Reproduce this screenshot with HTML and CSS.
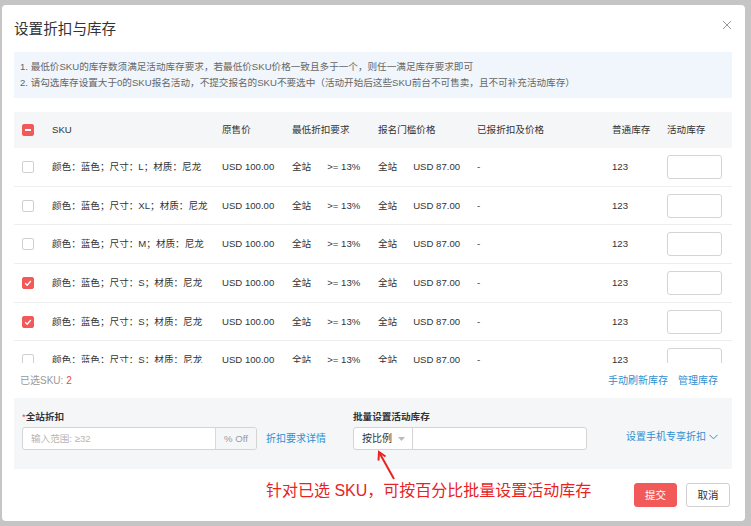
FILE: index.html
```html
<!DOCTYPE html>
<html lang="zh-CN">
<head>
<meta charset="utf-8">
<title>设置折扣与库存</title>
<link rel="stylesheet" href="styles.css">
</head>
<body>
<div class="modal">
  <div class="modal-head">
    <h2 class="title">设置折扣与库存</h2>
    <svg class="close" width="10" height="10" viewBox="0 0 10 10"><path d="M1 1L9 9M9 1L1 9" stroke="#999" stroke-width="1" fill="none"/></svg>
  </div>

  <div class="notice">
    <p>1. 最低价SKU的库存数须满足活动库存要求，若最低价SKU价格一致且多于一个，则任一满足库存要求即可</p>
    <p>2. 请勾选库存设置大于0的SKU报名活动，不提交报名的SKU不要选中（活动开始后这些SKU前台不可售卖，且不可补充活动库存）</p>
  </div>

  <div class="table">
    <div class="row head">
      <div class="c-check"><span class="cb cb-half"><i></i></span></div>
      <div>SKU</div>
      <div>原售价</div>
      <div>最低折扣要求</div>
      <div>报名门槛价格</div>
      <div>已报折扣及价格</div>
      <div>普通库存</div>
      <div>活动库存</div>
    </div>
    <div class="tbody">
      <div class="row">
        <div class="c-check"><span class="cb"></span></div>
        <div>颜色：蓝色；尺寸：L；材质：尼龙</div>
        <div>USD 100.00</div>
        <div class="pair"><span>全站</span><span>&gt;= 13%</span></div>
        <div class="pair"><span>全站</span><span>USD 87.00</span></div>
        <div>-</div>
        <div>123</div>
        <div><span class="qty"></span></div>
      </div>
      <div class="row">
        <div class="c-check"><span class="cb"></span></div>
        <div>颜色：蓝色；尺寸：XL；材质：尼龙</div>
        <div>USD 100.00</div>
        <div class="pair"><span>全站</span><span>&gt;= 13%</span></div>
        <div class="pair"><span>全站</span><span>USD 87.00</span></div>
        <div>-</div>
        <div>123</div>
        <div><span class="qty"></span></div>
      </div>
      <div class="row">
        <div class="c-check"><span class="cb"></span></div>
        <div>颜色：蓝色；尺寸：M；材质：尼龙</div>
        <div>USD 100.00</div>
        <div class="pair"><span>全站</span><span>&gt;= 13%</span></div>
        <div class="pair"><span>全站</span><span>USD 87.00</span></div>
        <div>-</div>
        <div>123</div>
        <div><span class="qty"></span></div>
      </div>
      <div class="row">
        <div class="c-check"><span class="cb cb-on"><svg width="12" height="12" viewBox="0 0 12 12"><path d="M3.2 6.2L5.2 8.2L8.8 4" stroke="#fff" stroke-width="1.3" fill="none"/></svg></span></div>
        <div>颜色：蓝色；尺寸：S；材质：尼龙</div>
        <div>USD 100.00</div>
        <div class="pair"><span>全站</span><span>&gt;= 13%</span></div>
        <div class="pair"><span>全站</span><span>USD 87.00</span></div>
        <div>-</div>
        <div>123</div>
        <div><span class="qty"></span></div>
      </div>
      <div class="row">
        <div class="c-check"><span class="cb cb-on"><svg width="12" height="12" viewBox="0 0 12 12"><path d="M3.2 6.2L5.2 8.2L8.8 4" stroke="#fff" stroke-width="1.3" fill="none"/></svg></span></div>
        <div>颜色：蓝色；尺寸：S；材质：尼龙</div>
        <div>USD 100.00</div>
        <div class="pair"><span>全站</span><span>&gt;= 13%</span></div>
        <div class="pair"><span>全站</span><span>USD 87.00</span></div>
        <div>-</div>
        <div>123</div>
        <div><span class="qty"></span></div>
      </div>
      <div class="row">
        <div class="c-check"><span class="cb"></span></div>
        <div>颜色：蓝色；尺寸：S；材质：尼龙</div>
        <div>USD 100.00</div>
        <div class="pair"><span>全站</span><span>&gt;= 13%</span></div>
        <div class="pair"><span>全站</span><span>USD 87.00</span></div>
        <div>-</div>
        <div>123</div>
        <div><span class="qty"></span></div>
      </div>
    </div>
  </div>

  <div class="summary">
    <div class="selected">已选SKU: <em>2</em></div>
    <div class="links"><a>手动刷新库存</a><a>管理库存</a></div>
  </div>

  <div class="batch">
    <div class="field f1">
      <div class="label"><b class="req">*</b>全站折扣</div>
      <div class="ctrl">
        <div class="group">
          <span class="inp">输入范围: ≥32</span><span class="addon">% Off</span>
        </div>
        <a class="link">折扣要求详情</a>
      </div>
    </div>
    <div class="field f2">
      <div class="label">批量设置活动库存</div>
      <div class="ctrl">
        <div class="group">
          <span class="select">按比例<svg width="7" height="4" viewBox="0 0 7 4"><path d="M0 0H7L3.5 4Z" fill="#bbb"/></svg></span><span class="inp2"></span>
        </div>
      </div>
    </div>
    <div class="field f3">
      <a class="link mobile">设置手机专享折扣<svg width="9" height="6" viewBox="0 0 9 6"><path d="M0.5 0.8L4.5 4.8L8.5 0.8" stroke="#2f8fd0" stroke-width="1" fill="none"/></svg></a>
    </div>
  </div>

  <div class="actions">
    <p class="note">针对已选 SKU，可按百分比批量设置活动库存</p>
    <div class="btns">
      <span class="btn btn-primary">提交</span>
      <span class="btn">取消</span>
    </div>
  </div>

  <svg class="pointer" width="30" height="36" viewBox="0 0 30 36">
    <path d="M22 30L7.5 4" stroke="#e8231f" stroke-width="2" fill="none"/>
    <path d="M6.5 11.5L7 3L13.5 7.5" stroke="#e8231f" stroke-width="2" fill="none" stroke-linejoin="miter"/>
  </svg>
</div>
</body>
</html>
```

FILE: styles.css
```css
* { box-sizing: border-box; }

body {
  margin: 0;
  background: #c5c5c5;
  font-family: "Liberation Sans", "Noto Sans CJK SC", sans-serif;
  color: #333;
  font-size: 9.6px;
  line-height: 14px;
}

.modal {
  position: relative;
  width: 743px;
  height: 516px;
  margin: 5px 0 0 2px;
  background: #fff;
  border-radius: 4px;
  padding: 0 13px 0 12px;
  display: flex;
  flex-direction: column;
}

.modal-head {
  height: 47px;
  padding-top: 14px;
  display: flex;
  justify-content: space-between;
  align-items: flex-start;
}

.title {
  margin: 0;
  font-size: 14.6px;
  line-height: 20px;
  font-weight: normal;
  color: #333;
}

.close {
  margin-top: 1px;
  margin-right: 0;
}

.notice {
  height: 46px;
  background: #f0f6fc;
  padding: 7px 6px;
  color: #666;
}

.notice p {
  margin: 0;
  line-height: 16px;
  white-space: nowrap;
}

.table {
  margin-top: 14px;
}

.row {
  display: grid;
  grid-template-columns: 38px 170px 70px 86px 99px 135px 55px 65px;
  align-items: center;
  white-space: nowrap;
}

.row.head {
  height: 36px;
  background: #f5f6f8;
}

.tbody {
  height: 215px;
  overflow: hidden;
}

.tbody .row {
  height: 38.7px;
  border-bottom: 1px solid #eeeeee;
}

.c-check {
  padding-left: 8px;
  display: flex;
  align-items: center;
}

.cb {
  width: 12px;
  height: 12px;
  border: 1px solid #cfcfcf;
  border-radius: 2px;
  background: #fff;
  display: flex;
  align-items: center;
  justify-content: center;
}

.cb-half, .cb-on {
  background: #f25a5a;
  border-color: #f25a5a;
}

.cb-half i {
  display: block;
  width: 6px;
  height: 2px;
  background: #fff;
}

.cb-on svg { flex: none; }

.pair {
  display: flex;
  align-items: baseline;
  gap: 16px;
}

.qty {
  display: block;
  width: 55px;
  height: 24px;
  border: 1px solid #d4d4d4;
  border-radius: 3px;
  background: #fff;
}

.summary {
  height: 35px;
  padding: 0 14px 0 6px;
  display: flex;
  align-items: center;
  justify-content: space-between;
}

.selected { color: #999; font-size: 10px; }
.selected em { font-style: normal; color: #f04545; }

.links { display: flex; gap: 10px; font-size: 10px; }

a, .link {
  color: #2f8fd0;
  text-decoration: none;
}

.batch {
  height: 71px;
  background: #f5f6f8;
  padding: 12px 14px 0 8px;
  display: flex;
}

.label {
  line-height: 14px;
  font-weight: bold;
  color: #333;
}

.req { color: #f04545; font-weight: normal; }

.ctrl {
  margin-top: 3px;
  display: flex;
  align-items: center;
  gap: 9px;
}

.ctrl .link { font-size: 10px; }

.f1 { width: 331px; }
.f2 { width: 234px; }
.f3 {
  flex: 1;
  display: flex;
  justify-content: flex-end;
  align-items: center;
  padding-top: 6px;
  height: 47px;
}

.group {
  display: flex;
  height: 23px;
  border: 1px solid #d4d4d4;
  border-radius: 3px;
  background: #fff;
  overflow: hidden;
}

.inp {
  width: 192px;
  padding-left: 8px;
  line-height: 21px;
  color: #b5b5b5;
}

.addon {
  width: 41px;
  border-left: 1px solid #d9d9d9;
  background: #f5f6f8;
  color: #999;
  text-align: center;
  line-height: 21px;
}

.select {
  width: 59px;
  padding-left: 8px;
  display: flex;
  align-items: center;
  gap: 6px;
  border-right: 1px solid #d4d4d4;
  color: #333;
  font-size: 10px;
}

.inp2 { width: 173px; }

.mobile {
  display: flex;
  align-items: center;
  gap: 3px;
  line-height: 14px;
  font-size: 10px;
}

.actions {
  flex: 1;
  display: flex;
  align-items: flex-start;
}

.note {
  margin: 13px 0 0 252px;
  font-size: 16px;
  line-height: 18px;
  color: #e8231f;
  white-space: nowrap;
}

.btns {
  margin: 14px 2px 0 auto;
  display: flex;
  gap: 9px;
}

.btn {
  width: 44px;
  height: 24px;
  border: 1px solid #d0d0d0;
  border-radius: 3px;
  background: #fff;
  color: #333;
  font-size: 10.5px;
  display: flex;
  align-items: center;
  justify-content: center;
}

.btn-primary {
  width: 43px;
  background: #f25a5a;
  border-color: #f25a5a;
  color: #fff;
}

.pointer {
  position: absolute;
  left: 370px;
  top: 444px;
}
```
